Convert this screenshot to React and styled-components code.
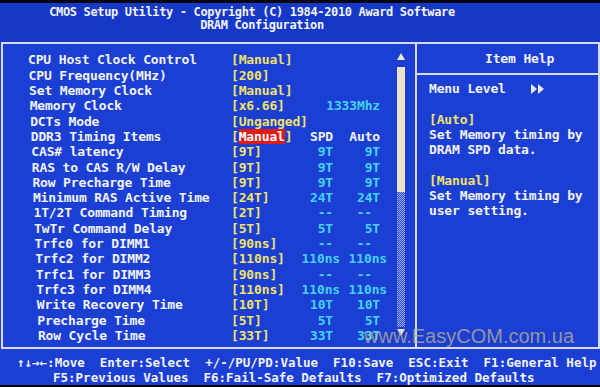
import React from 'react';
import styled, { createGlobalStyle } from 'styled-components';

const MONO = `"DejaVu Sans Mono", "Liberation Mono", monospace`;
const WHITE = '#f2f3ff';
const YELLOW = '#f1e26a';
const CYAN = '#44d2f2';
const LINE = '#d6daf2';

const Global = createGlobalStyle`
  html, body { margin: 0; padding: 0; background: #000; }
  body { width: 600px; height: 387px; overflow: hidden; }
`;

const Screen = styled.div`
  position: relative;
  width: 600px;
  height: 387px;
  box-sizing: border-box;
  border-top: 3px solid #04050a;
  border-bottom: 2px solid #04050a;
  background: #1b3fd3;
  font-family: ${MONO};
  font-weight: bold;
  display: flex;
  flex-direction: column;
  overflow: hidden;
`;

const TitleBar = styled.header`
  height: 39px;
  box-sizing: border-box;
  padding-top: 3px;
  background: #1538c6;
  color: ${WHITE};
  font-size: 12px;
  letter-spacing: -0.35px;
  line-height: 13.3px;
  display: flex;
  flex-direction: column;
`;

const TitleLine = styled.div`
  text-align: center;
  white-space: pre;
  padding-right: ${(p) => p.$offset}px;
`;

const Frame = styled.div`
  height: 307px;
  box-sizing: border-box;
  margin-left: 1px;
  border: 2px solid ${LINE};
  display: grid;
  grid-template-columns: 412px 1fr;
`;

const MainPanel = styled.section`
  display: flex;
  min-height: 0;
`;

const RowList = styled.div`
  flex: 1;
  padding-top: 8.5px;
  display: flex;
  flex-direction: column;
`;

const Row = styled.div`
  display: grid;
  grid-template-columns: 228px 72px 30px 47px;
  height: 15.3px;
  line-height: 15.3px;
  font-size: 13px;
  letter-spacing: -0.15px;
  white-space: pre;
`;

const Label = styled.span`
  color: ${WHITE};
  padding-left: ${(p) => 25 + p.$i * 0.55}px;
`;

const Value = styled.span`
  color: ${YELLOW};
  overflow: visible;
`;

const Selected = styled.span`
  color: #ffffff;
  background: #e01b16;
`;

const Info = styled.span`
  justify-self: end;
  color: ${(p) => (p.$head ? WHITE : CYAN)};
  margin-right: ${(p) => -(p.$shift || 0)}px;
  grid-column: ${(p) => (p.$span ? 'span 2' : 'auto')};
`;

const ScrollCol = styled.div`
  width: 16px;
  margin-right: 6px;
  padding-top: 9.5px;
  display: flex;
  flex-direction: column;
  align-items: center;
`;

const ArrowUp = styled.div`
  width: 0;
  height: 0;
  border-left: 4px solid transparent;
  border-right: 4px solid transparent;
  border-bottom: 7px solid #ece8cc;
`;

const ArrowDown = styled(ArrowUp)`
  border-bottom: none;
  border-top: 7px solid #e6e2c6;
  margin-top: 2px;
`;

const Thumb = styled.div`
  margin-top: 6.5px;
  width: 8px;
  height: 125px;
  background: #e8e4c4;
`;

const Track = styled.div`
  width: 8px;
  height: 135px;
  background: repeating-conic-gradient(#9ea8e6 0 25%, #2c4cd6 0 50%) 0 0 / 2px 2px;
`;

const HelpPanel = styled.aside`
  border-left: 2px solid ${LINE};
  display: flex;
  flex-direction: column;
  color: ${WHITE};
  font-size: 13px;
  letter-spacing: -0.15px;
`;

const HelpHeader = styled.div`
  height: 29px;
  line-height: 29px;
  padding-left: 68px;
  border-bottom: 2px solid ${LINE};
`;

const HelpBody = styled.div`
  padding: 6px 0 0 12px;
  line-height: 15.3px;
  display: flex;
  flex-direction: column;
`;

const HelpLine = styled.div`
  height: 15.3px;
  white-space: pre;
  color: ${(p) => (p.$yellow ? YELLOW : WHITE)};
  display: flex;
  align-items: center;
`;

const LevelArrows = styled.svg`
  margin-left: 25px;
`;

const Footer = styled.footer`
  flex: 1;
  padding-top: 6.5px;
  color: ${WHITE};
  font-size: 12.5px;
  line-height: 15px;
  display: flex;
  flex-direction: column;
`;

const FooterLine = styled.div`
  white-space: pre;
  padding-left: ${(p) => p.$indent}px;
`;

const Watermark = styled.div`
  position: absolute;
  left: 364px;
  top: 323px;
  font-family: "Liberation Sans", Arial, sans-serif;
  font-weight: normal;
  font-size: 20px;
  line-height: 20px;
  color: rgba(196, 184, 140, 0.72);
  pointer-events: none;
`;

const rows = [
  { label: 'CPU Host Clock Control', value: '[Manual]' },
  { label: 'CPU Frequency(MHz)', value: '[200]' },
  { label: 'Set Memory Clock', value: '[Manual]' },
  { label: 'Memory Clock', value: '[x6.66]', wide: '1333Mhz' },
  { label: 'DCTs Mode', value: '[Unganged]' },
  { label: 'DDR3 Timing Items', selected: 'Manual', spd: 'SPD', auto: 'Auto', head: true },
  { label: 'CAS# latency', value: '[9T]', spd: '9T', auto: '9T' },
  { label: 'RAS to CAS R/W Delay', value: '[9T]', spd: '9T', auto: '9T' },
  { label: 'Row Precharge Time', value: '[9T]', spd: '9T', auto: '9T' },
  { label: 'Minimum RAS Active Time', value: '[24T]', spd: '24T', auto: '24T' },
  { label: '1T/2T Command Timing', value: '[2T]', spd: '--', auto: '--', autoShift: -8 },
  { label: 'TwTr Command Delay', value: '[5T]', spd: '5T', auto: '5T' },
  { label: 'Trfc0 for DIMM1', value: '[90ns]', spd: '--', auto: '--', autoShift: -8 },
  { label: 'Trfc2 for DIMM2', value: '[110ns]', spd: '110ns', auto: '110ns', spdShift: 7, autoShift: 7 },
  { label: 'Trfc1 for DIMM3', value: '[90ns]', spd: '--', auto: '--', autoShift: -8 },
  { label: 'Trfc3 for DIMM4', value: '[110ns]', spd: '110ns', auto: '110ns', spdShift: 7, autoShift: 7 },
  { label: 'Write Recovery Time', value: '[10T]', spd: '10T', auto: '10T' },
  { label: 'Precharge Time', value: '[5T]', spd: '5T', auto: '5T' },
  { label: 'Row Cycle Time', value: '[33T]', spd: '33T', auto: '33T' },
];

const help = [
  { text: '' },
  { text: '[Auto]', yellow: true },
  { text: 'Set Memory timing by' },
  { text: 'DRAM SPD data.' },
  { text: '' },
  { text: '[Manual]', yellow: true },
  { text: 'Set Memory timing by' },
  { text: 'user setting.' },
];

function SettingRow({ row, i }) {
  return (
    <Row>
      <Label $i={i}>{row.label}</Label>
      {row.selected ? (
        <Value>
          [<Selected>{row.selected}</Selected>]
        </Value>
      ) : (
        <Value>{row.value}</Value>
      )}
      {row.wide && <Info $span>{row.wide}</Info>}
      {row.spd && (
        <Info $head={row.head} $shift={row.spdShift}>
          {row.spd}
        </Info>
      )}
      {row.auto && (
        <Info $head={row.head} $shift={row.autoShift}>
          {row.auto}
        </Info>
      )}
    </Row>
  );
}

export default function App() {
  return (
    <>
      <Global />
      <Screen>
        <TitleBar>
          <TitleLine $offset={96}>CMOS Setup Utility - Copyright (C) 1984-2010 Award Software</TitleLine>
          <TitleLine $offset={76}>DRAM Configuration</TitleLine>
        </TitleBar>
        <Frame>
          <MainPanel>
            <RowList>
              {rows.map((r, i) => (
                <SettingRow key={r.label} row={r} i={i} />
              ))}
            </RowList>
            <ScrollCol>
              <ArrowUp />
              <Thumb />
              <Track />
              <ArrowDown />
            </ScrollCol>
          </MainPanel>
          <HelpPanel>
            <HelpHeader>Item Help</HelpHeader>
            <HelpBody>
              <HelpLine>
                Menu Level
                <LevelArrows width="14" height="10" viewBox="0 0 14 10">
                  <polygon points="0,0 6,5 0,10" fill="#e8e8f4" />
                  <polygon points="7,0 13,5 7,10" fill="#e8e8f4" />
                </LevelArrows>
              </HelpLine>
              {help.map((h, i) => (
                <HelpLine key={i} $yellow={h.yellow}>
                  {h.text}
                </HelpLine>
              ))}
            </HelpBody>
          </HelpPanel>
        </Frame>
        <Footer>
          <FooterLine $indent={17}>
            {'↑↓→←:Move  Enter:Select  +/-/PU/PD:Value  F10:Save  ESC:Exit  F1:General Help'}
          </FooterLine>
          <FooterLine $indent={53}>
            {'F5:Previous Values  F6:Fail-Safe Defaults  F7:Optimized Defaults'}
          </FooterLine>
        </Footer>
        <Watermark>www.EasyCOM.com.ua</Watermark>
      </Screen>
    </>
  );
}
